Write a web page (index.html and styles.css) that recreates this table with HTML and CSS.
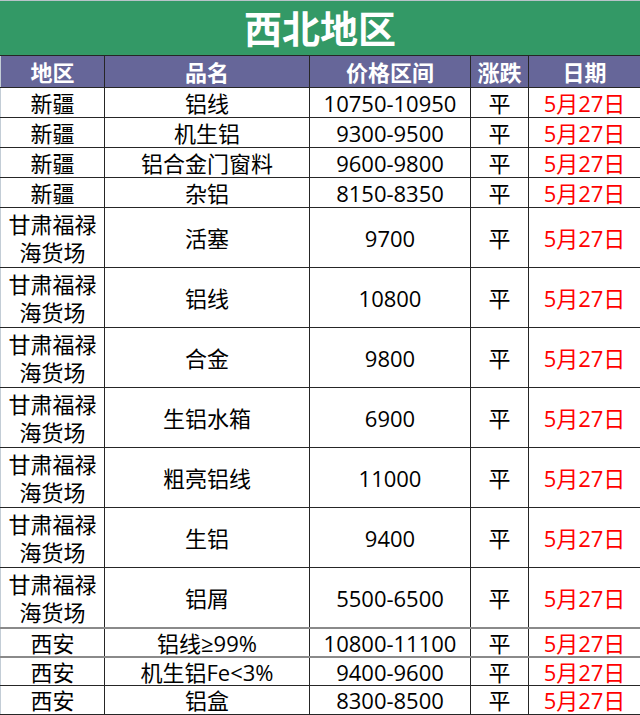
FILE: index.html
```html
<!DOCTYPE html>
<html lang="zh">
<head>
<meta charset="utf-8">
<title>西北地区</title>
<link rel="stylesheet" href="styles.css">
</head>
<body>
<div class="sheet">
  <div class="title">西北地区</div>
  <table class="grid">
    <colgroup>
      <col class="c1"><col class="c2"><col class="c3"><col class="c4"><col class="c5">
    </colgroup>
    <thead>
      <tr class="head"><th>地区</th><th>品名</th><th>价格区间</th><th>涨跌</th><th>日期</th></tr>
    </thead>
    <tbody>
      <tr class="r30"><td>新疆</td><td>铝线</td><td class="num">10750-10950</td><td>平</td><td class="date">5月27日</td></tr>
      <tr class="r30"><td>新疆</td><td>机生铝</td><td class="num">9300-9500</td><td>平</td><td class="date">5月27日</td></tr>
      <tr class="r30"><td>新疆</td><td>铝合金门窗料</td><td class="num">9600-9800</td><td>平</td><td class="date">5月27日</td></tr>
      <tr class="r30"><td>新疆</td><td>杂铝</td><td class="num">8150-8350</td><td>平</td><td class="date">5月27日</td></tr>
      <tr class="r60"><td>甘肃福禄<br>海货场</td><td>活塞</td><td class="num">9700</td><td>平</td><td class="date">5月27日</td></tr>
      <tr class="r60"><td>甘肃福禄<br>海货场</td><td>铝线</td><td class="num">10800</td><td>平</td><td class="date">5月27日</td></tr>
      <tr class="r60"><td>甘肃福禄<br>海货场</td><td>合金</td><td class="num">9800</td><td>平</td><td class="date">5月27日</td></tr>
      <tr class="r60"><td>甘肃福禄<br>海货场</td><td>生铝水箱</td><td class="num">6900</td><td>平</td><td class="date">5月27日</td></tr>
      <tr class="r60"><td>甘肃福禄<br>海货场</td><td>粗亮铝线</td><td class="num">11000</td><td>平</td><td class="date">5月27日</td></tr>
      <tr class="r60"><td>甘肃福禄<br>海货场</td><td>生铝</td><td class="num">9400</td><td>平</td><td class="date">5月27日</td></tr>
      <tr class="r60"><td>甘肃福禄<br>海货场</td><td>铝屑</td><td class="num">5500-6500</td><td>平</td><td class="date">5月27日</td></tr>
      <tr class="r29 grey-top"><td>西安</td><td>铝线≥99%</td><td class="num">10800-11100</td><td>平</td><td class="date">5月27日</td></tr>
      <tr class="r29 grey-top"><td>西安</td><td>机生铝Fe&lt;3%</td><td class="num">9400-9600</td><td>平</td><td class="date">5月27日</td></tr>
      <tr class="r29"><td>西安</td><td>铝盒</td><td class="num">8300-8500</td><td>平</td><td class="date">5月27日</td></tr>
    </tbody>
  </table>
</div>
</body>
</html>
```
FILE: styles.css
```css
html, body {
  margin: 0;
  padding: 0;
  background: #ffffff;
}
.sheet {
  width: 640px;
  font-family: "Open Sans", "Noto Sans CJK SC", sans-serif;
  color: #000;
}
.title {
  height: 54px;
  border-top: 1px solid #b9c3c9;
  background: #339966;
  color: #ffffff;
  font-weight: bold;
  font-size: 38px;
  line-height: 54px;
  text-align: center;
}
.grid {
  width: 640px;
  table-layout: fixed;
  border-collapse: collapse;
}
.c1 { width: 104px; }
.c2 { width: 205px; }
.c3 { width: 161px; }
.c4 { width: 58px; }
.c5 { width: 112px; }
.grid th, .grid td {
  padding: 0;
  text-align: center;
  vertical-align: middle;
  border: 1px solid #262626;
  font-size: 22px;
  line-height: 24px;
  overflow: hidden;
  white-space: nowrap;
}
.grid tr > :first-child { border-left: 1px solid #c3cdd6; }
.r60 td:first-child { line-height: 28px; }
.head th {
  background: #666699;
  color: #ffffff;
  font-weight: bold;
  font-size: 22px;
  height: 31px;
}
.r30 td { height: 29px; }
.r60 td { height: 59px; }
.r29 td { height: 28px; }
.grey-top td { border-top: 2px solid #8a8a8a; height: 27px; }
.num { font-size: 22.5px; }
.date { color: #ff0000; font-size: 22.5px; }
```
